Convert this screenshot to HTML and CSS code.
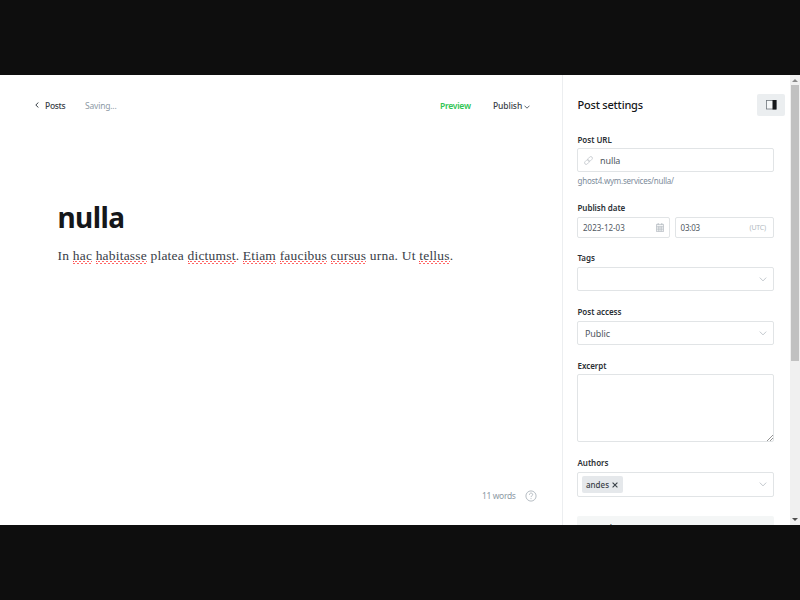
FILE: index.html
```
<!DOCTYPE html>
<html lang="en">
<head>
<meta charset="utf-8">
<title>Post editor</title>
<link rel="stylesheet" href="styles.css">
</head>
<body>
<div class="app">
  <main class="editor">
    <header class="topbar">
      <svg class="back" width="4" height="6" viewBox="0 0 4 6"><path d="M3.400.5.8 3l2.600 2.500" fill="none" stroke="#394047"/></svg>
      <span class="posts">Posts</span>
      <span class="saving">Saving...</span>
      <span class="preview">Preview</span>
      <span class="publish">Publish</span>
      <svg class="caret" width="6" height="4" viewBox="0 0 6 4"><path d="M.5.7 3 3.200 5.500.7" fill="none" stroke="#5d666e"/></svg>
    </header>
    <h1>nulla</h1>
    <p class="body">In <u>hac</u> <u>habitasse</u> platea <u>dictumst</u>. <u>Etiam</u> <u>faucibus</u> <u>cursus</u> urna. Ut <u>tellus</u>.</p>
    <footer class="status">
      <span class="words">11 words</span>
      <svg width="12" height="12" viewBox="0 0 12 12" fill="none" stroke="#a3acb4" stroke-width=".8"><circle cx="6" cy="6" r="5.100"/><path d="M4.400 4.800c0-2.300 3.300-2.200 3.300-.2 0 1.200-1.700 1.200-1.700 2.500M6 8.200v.9"/></svg>
    </footer>
  </main>
  <aside class="settings">
    <header class="settings-head">
      <h2>Post settings</h2>
      <span class="toggle"><svg width="11" height="10" viewBox="0 0 11 10"><rect x=".5" y=".5" width="9.500" height="8.500" fill="#f5f7f8" stroke="#70777d" stroke-width=".8"/><path d="M6.500 0h4v9.500h-4z" fill="#15171a"/></svg></span>
    </header>
    <section class="field url">
      <label>Post URL</label>
      <div class="box">
        <svg width="9" height="9" viewBox="0 0 9 9" fill="none" stroke="#c3c8cc" stroke-width=".8"><g transform="rotate(45 4.500 4.500)"><rect x="2.900" y="-.4" width="3.200" height="5.400" rx="1.600"/><rect x="2.900" y="4" width="3.200" height="5.400" rx="1.600"/></g></svg>
        <span class="value">nulla</span>
      </div>
      <div class="help">ghost4.wym.services/nulla/</div>
    </section>
    <section class="field date">
      <label>Publish date</label>
      <div class="pair">
        <div class="box day"><span>2023-12-03</span>
          <svg width="8" height="9" viewBox="0 0 8 9"><path d="M.4 1.400h7.200v7.200H.4zM.4 3.300h7.200M2.200 0v2M5.800 0v2M2.800 3.300v5.200M5.200 3.300v5.200M.5 5h7M.5 6.800h7" fill="none" stroke="#b6bdc3" stroke-width=".8"/></svg>
        </div>
        <div class="box time"><span>03:03</span><small>(UTC)</small></div>
      </div>
    </section>
    <section class="field tags">
      <label>Tags</label>
      <div class="box select"><svg class="chev" width="8" height="5" viewBox="0 0 8 5"><path d="M.8.6 4 3.900 7.200.6"/></svg></div>
    </section>
    <section class="field access">
      <label>Post access</label>
      <div class="box select"><span class="value">Public</span><svg class="chev" width="8" height="5" viewBox="0 0 8 5"><path d="M.8.6 4 3.900 7.200.6"/></svg></div>
    </section>
    <section class="field excerpt">
      <label>Excerpt</label>
      <div class="box area"><svg width="6" height="6" viewBox="0 0 6 6"><path d="M0 6 6 0M3 6l3-3" stroke="#777" stroke-width=".8"/></svg></div>
    </section>
    <section class="field authors">
      <label>Authors</label>
      <div class="box select"><span class="token">andes<svg width="6" height="6" viewBox="0 0 6 6"><path d="m.6.6 4.800 4.800M5.400.6.6 5.400" stroke="#394047" stroke-width="1.100"/></svg></span><svg class="chev" width="8" height="5" viewBox="0 0 8 5"><path d="M.8.6 4 3.900 7.200.6"/></svg></div>
    </section>
    <div class="meta">Meta data</div>
  </aside>
  <div class="scroll">
    <svg width="6" height="3" viewBox="0 0 6 3"><path d="M0 3 3 0l3 3z" fill="#8a8a8a"/></svg>
    <i class="thumb"></i>
    <svg class="down" width="6" height="3" viewBox="0 0 6 3"><path d="m0 0 3 3 3-3z" fill="#505050"/></svg>
  </div>
</div>
</body>
</html>
```
FILE: styles.css
```
* { box-sizing: border-box; }
body {
  margin: 0;
  height: 600px;
  padding: 75px 0;
  background: #0e0e0e;
  font-family: "Noto Sans", "Open Sans", sans-serif;
  font-size: 8px;
  color: #50585f;
  overflow: hidden;
}
svg { display: block; flex: none; }
.app { display: flex; height: 450px; background: #fff; overflow: hidden; }

.editor { width: 562px; display: flex; flex-direction: column; }
.topbar {
  display: flex;
  align-items: center;
  height: 22px;
  margin-top: 19px;
  padding-left: 35px;
  font-size: 8.5px;
  font-weight: 500;
  color: #394047;
  white-space: nowrap;
}
.posts { width: 40px; margin-left: 6px; letter-spacing: -.3px; }
.saving { width: 355px; color: #8d9aa5; font-weight: 400; letter-spacing: -.2px; }
.preview { width: 53px; color: #30c553; font-weight: 600; letter-spacing: -.25px; }
.publish { width: 31px; letter-spacing: -.1px; }
.caret { margin-top: 3px; }
h1 {
  margin: 81px 0 0 57.500px;
  font-size: 28px;
  line-height: 40px;
  font-weight: 700;
  letter-spacing: -.6px;
  color: #15171a;
}
.body {
  margin: 9px 0 0 57.500px;
  font-family: "Liberation Serif", serif;
  font-size: 13.500px;
  line-height: 20px;
  letter-spacing: .2px;
  color: #394047;
  white-space: nowrap;
}
.body u {
  padding-bottom: 1px;
  background: repeating-linear-gradient(45deg, #f55 0 1px, transparent 1px 2.830px) 0 100% / 4px 2px repeat-x;
  background: 
    linear-gradient(#f44, #f44) 0 calc(100% - 2px) / 1px 1px no-repeat,
    conic-gradient(from 0deg, #f66 25%, transparent 0 50%, #f66 0 75%, transparent 0) 0 100% / 4px 3px repeat-x;
  text-decoration: none;
}
.status {
  display: flex;
  align-items: center;
  justify-content: flex-end;
  gap: 9px;
  height: 20px;
  margin: auto 25.500px 19.500px 0;
  font-size: 8.500px;
  letter-spacing: -.35px;
  color: #8d9aa5;
}

.settings {
  width: 228px;
  padding: 19px 5px 0 15px;
  border-left: 1px solid #eceef0;
}
.settings-head { display: flex; justify-content: space-between; height: 22px; }
h2 {
  margin: 0 0 0 -.5px;
  font-size: 11px;
  line-height: 22px;
  font-weight: 500;
  letter-spacing: -.2px;
  color: #15171a;
}
.toggle {
  display: flex;
  align-items: center;
  justify-content: center;
  width: 28px;
  height: 22px;
  border-radius: 2px;
  background: #ebeef0;
}
.field { width: 197px; margin-left: -1px; }
.field label {
  display: block;
  height: 17px;
  padding-left: .5px;
  line-height: 16px;
  font-weight: 600;
  letter-spacing: -.05px;
  color: #2b3035;
}
.url label, .excerpt label { line-height: 18px; }
.box {
  display: flex;
  align-items: center;
  height: 24px;
  border: 1px solid #e1e4e6;
  border-radius: 2px;
}
.value { font-size: 9px; letter-spacing: -.1px; }
.url { margin-top: 15px; }
.url .box { padding-left: 6px; gap: 7px; }
.help { height: 18px; padding-left: .5px; line-height: 18px; letter-spacing: -.24px; color: #7c8b9a; }
.date { margin-top: 10px; }
.pair { display: flex; gap: 5px; }
.pair .box { height: 21px; justify-content: space-between; padding: 0 5px; }
.pair .day { width: 93px; }
.pair .time { width: 99px; padding: 0 7px 0 4.500px; }
.pair .time span { letter-spacing: -.2px; }
.pair small { font-size: 7px; letter-spacing: -.2px; color: #b2bac1; }
.tags { margin-top: 12px; }
.select { padding: 0 6px 0 7px; }
.chev { margin-left: auto; fill: none; stroke: #c2c8cd; }
.access { margin-top: 13px; }
.excerpt { margin-top: 12px; }
.area { height: 68px; align-items: flex-end; justify-content: flex-end; }
.authors { margin-top: 13px; }
.authors .box { height: 25px; padding-left: 4px; }
.token {
  display: flex;
  align-items: center;
  gap: 3px;
  width: 41px;
  height: 17px;
  padding-left: 4px;
  border-radius: 2px;
  background: #e5e8eb;
  color: #394047;
  font-weight: 500;
  line-height: 15px;
}
.meta {
  width: 197px;
  height: 24px;
  margin: 19px 0 0 -1px;
  padding-left: 8px;
  line-height: 24px;
  border-radius: 2px;
  background: #f4f6f6;
  font-weight: 600;
}

.scroll {
  display: flex;
  flex-direction: column;
  align-items: center;
  width: 10px;
  padding: 4px 0;
  background: #f0f0f0;
}
.thumb { width: 8px; height: 276px; margin-top: 3px; background: #c1c1c1; }
.down { margin-top: auto; }
```
